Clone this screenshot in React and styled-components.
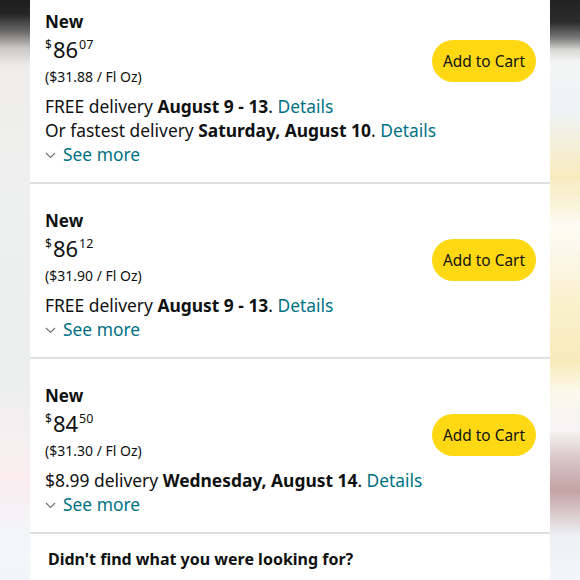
import styled, { createGlobalStyle } from "styled-components";

const GlobalStyle = createGlobalStyle`
  html, body {
    margin: 0;
    padding: 0;
    width: 580px;
    height: 580px;
    overflow: hidden;
  }
  body {
    font-family: "Noto Sans", Roboto, Arial, sans-serif;
    color: #0f1111;
  }
`;

const Screen = styled.div`
  display: flex;
  width: 580px;
  height: 580px;
  overflow: hidden;
`;

const SideBlur = styled.div`
  width: 30px;
  flex-shrink: 0;
  height: 100%;
  background: ${(p) => p.$bg};
`;

const Panel = styled.div`
  width: 520px;
  flex-shrink: 0;
  height: 100%;
  background: #fff;
  display: flex;
  flex-direction: column;
  overflow: hidden;
`;

const Offer = styled.div`
  padding: ${(p) => (p.$first ? "10px" : "25px")} 14px 15px 15px;
  border-bottom: 2px solid #dfe1e1;
`;

const TopRow = styled.div`
  display: flex;
  justify-content: space-between;
  align-items: flex-start;
`;

const Info = styled.div`
  display: flex;
  flex-direction: column;
`;

const Condition = styled.div`
  font-size: 17px;
  font-weight: 700;
  line-height: 24px;
`;

const Price = styled.div`
  display: flex;
  align-items: flex-start;
  line-height: 30px;
  height: 30px;
`;

const Sup = styled.span`
  font-size: ${(p) => (p.$left ? "12px" : "12.5px")};
  line-height: 17px;
  margin-top: 2px;
  margin-right: ${(p) => (p.$left ? "1px" : "0")};
  margin-left: ${(p) => (p.$left ? "0" : "1px")};
`;

const Whole = styled.span`
  font-size: 22px;
  line-height: 30px;
`;

const Unit = styled.div`
  font-size: 14px;
  line-height: 24px;
  margin-top: 1px;
`;

const CartButton = styled.button`
  margin-top: 30px;
  width: 104px;
  height: 42px;
  border: none;
  border-radius: 21px;
  background: #ffd814;
  color: #0f1111;
  font-family: inherit;
  font-size: 15.4px;
  padding: 0;
  cursor: pointer;
`;

const Line = styled.div`
  font-size: 17.4px;
  line-height: 24px;
  white-space: nowrap;
  margin-top: ${(p) => (p.$first ? "5px" : "0")};

  b {
    font-weight: 700;
  }
`;

const Link = styled.a`
  color: #007185;
  text-decoration: none;
`;

const SeeMore = styled.div`
  display: flex;
  align-items: center;
  gap: 7px;
  font-size: 17.4px;
  line-height: 24px;
  color: #007185;
  margin-bottom: 1px;

  svg {
    margin-top: 2px;
  }
`;

const Footer = styled.div`
  padding: 13px 18px;
  font-size: 16px;
  font-weight: 700;
  line-height: 24px;
  white-space: nowrap;
`;

const leftBg = `linear-gradient(180deg,
  #1f1f1f 0px, #252525 14px, #6d6c6b 32px, #c9c7c5 48px, #efedeb 66px,
  #eef0ef 200px, #eceeee 380px, #f7f0f1 450px, #faedf0 480px,
  #f3f5f8 530px, #f1f5fa 580px)`;

const rightBg = `linear-gradient(180deg,
  #222 0px, #2b2b2b 22px, #7a7a7a 38px, #d8d8d6 50px, #f4f5f4 62px,
  #eef3f6 110px, #f4efd8 145px, #f7ebbe 175px, #faf3da 205px, #fdfbf3 225px,
  #fbf6e4 265px, #faf1cd 300px, #f8eabb 362px, #fcf8ea 390px,
  #f6f4f4 430px, #d9c4c5 460px, #c4a3a5 490px, #d7c3c5 510px,
  #eef0f3 535px, #f2f6fa 580px)`;

const Chevron = () => (
  <svg width="11" height="7" viewBox="0 0 11 7" fill="none">
    <path d="M1 1l4.5 4.5L10 1" stroke="#6f7373" strokeWidth="1.2" />
  </svg>
);

const offers = [
  {
    whole: "86",
    cents: "07",
    unit: "($31.88 / Fl Oz)",
    lines: [
      ["FREE delivery ", "August 9 - 13"],
      ["Or fastest delivery ", "Saturday, August 10"],
    ],
  },
  {
    whole: "86",
    cents: "12",
    unit: "($31.90 / Fl Oz)",
    lines: [["FREE delivery ", "August 9 - 13"]],
  },
  {
    whole: "84",
    cents: "50",
    unit: "($31.30 / Fl Oz)",
    lines: [["$8.99 delivery ", "Wednesday, August 14"]],
  },
];

const App = () => {
  return (
    <>
      <GlobalStyle />
      <Screen>
        <SideBlur $bg={leftBg} />
        <Panel>
          {offers.map((o, i) => (
            <Offer key={i} $first={i === 0}>
              <TopRow>
                <Info>
                  <Condition>New</Condition>
                  <Price>
                    <Sup $left>$</Sup>
                    <Whole>{o.whole}</Whole>
                    <Sup>{o.cents}</Sup>
                  </Price>
                  <Unit>{o.unit}</Unit>
                </Info>
                <CartButton>Add to Cart</CartButton>
              </TopRow>
              {o.lines.map((l, j) => (
                <Line key={j} $first={j === 0}>
                  {l[0]}
                  <b>{l[1]}</b>. <Link>Details</Link>
                </Line>
              ))}
              <SeeMore>
                <Chevron />
                See more
              </SeeMore>
            </Offer>
          ))}
          <Footer>Didn't find what you were looking for?</Footer>
        </Panel>
        <SideBlur $bg={rightBg} />
      </Screen>
    </>
  );
};

export default App;
